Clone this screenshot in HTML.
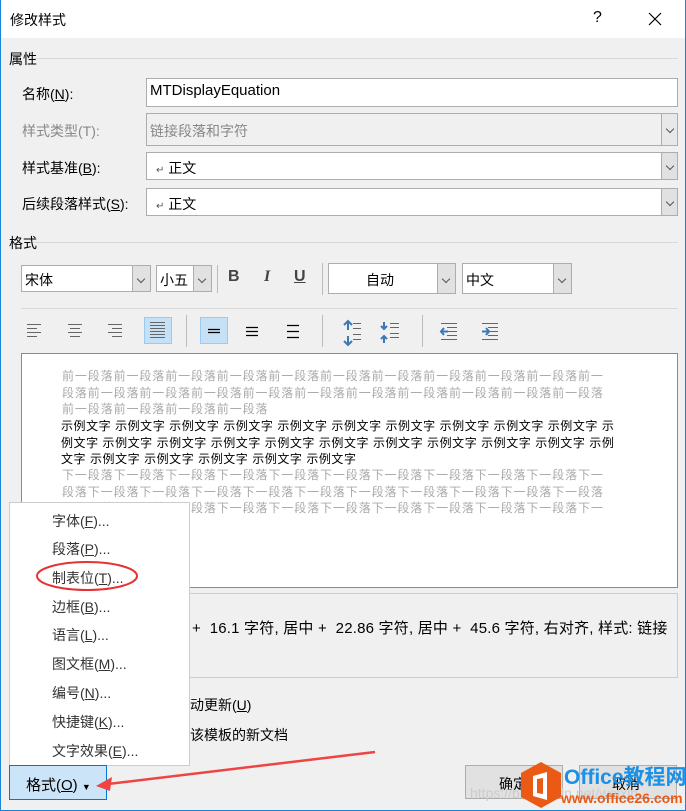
<!DOCTYPE html>
<html><head><meta charset="utf-8"><style>
*{margin:0;padding:0;box-sizing:border-box}
body{width:686px;height:811px;overflow:hidden;background:#f0f0f0;font-family:"Liberation Sans","Noto Sans CJK SC",sans-serif;font-size:14px;color:#000;position:relative}
.a{position:absolute;white-space:nowrap}
.win{position:absolute;left:0;top:0;width:686px;height:811px;border:1px solid #1883d7;border-top:none}
.title{position:absolute;left:1px;top:0;width:684px;height:38px;background:#fff}
.box{position:absolute;background:#fff;border:1px solid #adadad}
.dd{position:absolute;top:0;right:0;bottom:0;width:18px;background:#e1e1e1;border-left:1px solid #adadad}
.dd:after{content:"";position:absolute;left:5px;top:40%;width:5px;height:5px;border-right:1px solid #555;border-bottom:1px solid #555;transform:rotate(45deg)}
.line{position:absolute;height:1px;background:#d9d9d9}
.vs{position:absolute;width:1px;background:#bbb}
.g{color:#aaa}
.p{position:absolute;left:62px;font-size:12px;line-height:16.5px;white-space:nowrap;letter-spacing:0.9px}
.mi{position:absolute;left:52px;font-size:14px;color:#333}
u{text-decoration:underline}
</style></head><body>
<div class="win"></div>
<div class="title"></div>
<div class="a" style="left:10px;top:10px;font-size:14px">修改样式</div>
<div class="a" style="left:593px;top:9px;font-size:16px">?</div>
<svg class="a" style="left:648px;top:12px" width="14" height="14"><path d="M1 1L13 13M13 1L1 13" stroke="#000" stroke-width="1.2"/></svg>

<div class="a" style="left:9px;top:49px;font-size:14px">属性</div>
<div class="line" style="left:34px;top:58px;width:644px"></div>
<div class="a" style="left:22px;top:84px">名称(<u>N</u>):</div>
<div class="box" style="left:146px;top:78px;width:532px;height:29px"></div>
<div class="a" style="left:150px;top:82px;font-size:15px">MTDisplayEquation</div>
<div class="a g" style="left:22px;top:121px;color:#888">样式类型(T):</div>
<div class="box" style="left:146px;top:113px;width:532px;height:33px;background:#f0f0f0"><div class="dd" style="width:16px;background:#e8e8e8"></div></div>
<div class="a" style="left:150px;top:121px;color:#888">链接段落和字符</div>
<div class="a" style="left:22px;top:158px">样式基准(<u>B</u>):</div>
<div class="box" style="left:146px;top:152px;width:532px;height:28px"><div class="dd" style="width:16px"></div></div>
<div class="a" style="left:156px;top:158px"><span style="font-size:10px;color:#555">↵</span> 正文</div>
<div class="a" style="left:22px;top:194px">后续段落样式(<u>S</u>):</div>
<div class="box" style="left:146px;top:188px;width:532px;height:28px"><div class="dd" style="width:16px"></div></div>
<div class="a" style="left:156px;top:194px"><span style="font-size:10px;color:#555">↵</span> 正文</div>

<div class="a" style="left:9px;top:233px">格式</div>
<div class="line" style="left:34px;top:242px;width:644px"></div>
<div class="box" style="left:21px;top:265px;width:130px;height:27px"><div class="dd"></div></div>
<div class="a" style="left:25px;top:270px">宋体</div>
<div class="box" style="left:156px;top:265px;width:56px;height:27px"><div class="dd"></div></div>
<div class="a" style="left:160px;top:270px">小五</div>
<div class="vs" style="left:217px;top:265px;height:28px"></div>
<div class="a" style="left:228px;top:268px;font-weight:bold;font-size:16px;color:#444">B</div>
<div class="a" style="left:264px;top:268px;font-style:italic;font-weight:bold;font-size:16px;color:#444;font-family:'Liberation Serif'">I</div>
<div class="a" style="left:294px;top:268px;font-weight:bold;font-size:16px;color:#444;text-decoration:underline">U</div>
<div class="vs" style="left:322px;top:263px;height:32px"></div>
<div class="box" style="left:328px;top:263px;width:128px;height:31px"><div class="dd"></div></div>
<div class="a" style="left:366px;top:270px">自动</div>
<div class="box" style="left:462px;top:263px;width:110px;height:31px"><div class="dd"></div></div>
<div class="a" style="left:466px;top:270px">中文</div>
<div class="line" style="left:21px;top:308px;width:657px"></div>

<div class="a" style="left:144px;top:317px;width:28px;height:27px;background:#c6e0f5;border:1px solid #9ccaf0"></div>
<div class="a" style="left:200px;top:317px;width:28px;height:27px;background:#c6e0f5;border:1px solid #9ccaf0"></div>
<div class="vs" style="left:186px;top:315px;height:32px"></div>
<div class="vs" style="left:322px;top:315px;height:32px"></div>
<div class="vs" style="left:422px;top:315px;height:32px"></div>
<svg class="a" style="left:0;top:310px" width="686" height="40" stroke="#666" stroke-width="1">
<path d="M27 14.5h14M27 18.5h10M27 22.5h14M27 26.5h10"/>
<path d="M68 14.5h14M70 18.5h10M68 22.5h14M70 26.5h10"/>
<path d="M108 14.5h14M112 18.5h10M108 22.5h14M112 26.5h10"/>
<path d="M150 12.5h15M150 15.5h15M150 18.5h15M150 21.5h15M150 24.5h15M150 27.5h15"/>
<g stroke="#000" stroke-width="1.3"><path d="M208 19.5h12M208 22.5h12"/><path d="M246 17.5h12M246 21.5h12M246 25.5h12"/><path d="M287 15.5h12M287 21.5h12M287 27.5h12"/></g>
<path d="M348 12v8M348 26v8" stroke="#3b78b8" stroke-width="2"/><path d="M344 15l4-4 4 4M344 31l4 4 4-4" stroke="#3b78b8" stroke-width="2" fill="none"/>
<path d="M353 13.5h8M353 18.5h8M353 24.5h8M353 29.5h8"/>
<path d="M384 12v7M384 26v7" stroke="#3b78b8" stroke-width="2"/><path d="M381 16l3 3 3-3M381 29l3-3 3 3" stroke="#3b78b8" stroke-width="2" fill="none"/>
<path d="M390 13.5h9M390 17.5h9M390 23.5h9M390 27.5h9"/>
<path d="M441 13.5h16M447 17.5h10M447 21.5h10M447 25.5h10M441 29.5h16"/><path d="M448 21.5h-7M444 18l-3 3.5 3 3.5" stroke="#3b78b8" stroke-width="2" fill="none"/>
<path d="M482 13.5h16M488 17.5h10M488 21.5h10M488 25.5h10M482 29.5h16"/><path d="M482 21.5h7M486 18l3 3.5-3 3.5" stroke="#3b78b8" stroke-width="2" fill="none"/>
</svg>

<div class="box" style="left:21px;top:353px;width:657px;height:235px;border-color:#8a8a8a"></div>
<div class="p g" style="top:368px">前一段落前一段落前一段落前一段落前一段落前一段落前一段落前一段落前一段落前一段落前一<br>段落前一段落前一段落前一段落前一段落前一段落前一段落前一段落前一段落前一段落前一段落<br>前一段落前一段落前一段落前一段落</div>
<div class="p" style="top:418px;left:61px;letter-spacing:0.55px">示例文字 示例文字 示例文字 示例文字 示例文字 示例文字 示例文字 示例文字 示例文字 示例文字 示<br>例文字 示例文字 示例文字 示例文字 示例文字 示例文字 示例文字 示例文字 示例文字 示例文字 示例<br>文字 示例文字 示例文字 示例文字 示例文字 示例文字</div>
<div class="p g" style="top:467px">下一段落下一段落下一段落下一段落下一段落下一段落下一段落下一段落下一段落下一段落下一<br>段落下一段落下一段落下一段落下一段落下一段落下一段落下一段落下一段落下一段落下一段落<br>下一段落下一段落下一段落下一段落下一段落下一段落下一段落下一段落下一段落下一段落下一<br>段落</div>

<div class="a" style="left:186px;top:593px;width:492px;height:85px;border:1px solid #ccc;background:#f0f0f0"></div>
<div class="a" style="left:192px;top:617px;font-size:15px;letter-spacing:0.2px">+ &nbsp;16.1 字符, 居中 + &nbsp;22.86 字符, 居中 + &nbsp;45.6 字符, 右对齐, 样式: 链接</div>
<div class="a" style="left:190px;top:695px">动更新(<u>U</u>)</div>
<div class="a" style="left:190px;top:725px">该模板的新文档</div>

<div class="a" style="left:465px;top:765px;width:98px;height:34px;background:#e1e1e1;border:1px solid #adadad"></div>
<div class="a" style="left:499px;top:774px">确定</div>
<div class="a" style="left:579px;top:765px;width:98px;height:34px;background:#e1e1e1;border:1px solid #adadad"></div>
<div class="a" style="left:612px;top:774px">取消</div>
<div class="a" style="left:470px;top:785px;font-size:14px;color:#ccc">https://blog.csdn.net/weixin</div>

<div class="a" style="left:9px;top:502px;width:181px;height:264px;background:#fff;border:1px solid #ccc"></div>
<div class="mi" style="top:511px">字体(<u>F</u>)...</div>
<div class="mi" style="top:539px">段落(<u>P</u>)...</div>
<div class="mi" style="top:568px">制表位(<u>T</u>)...</div>
<div class="mi" style="top:597px">边框(<u>B</u>)...</div>
<div class="mi" style="top:625px">语言(<u>L</u>)...</div>
<div class="mi" style="top:654px">图文框(<u>M</u>)...</div>
<div class="mi" style="top:683px">编号(<u>N</u>)...</div>
<div class="mi" style="top:712px">快捷键(<u>K</u>)...</div>
<div class="mi" style="top:741px">文字效果(<u>E</u>)...</div>
<div class="a" style="left:9px;top:765px;width:98px;height:35px;background:#cce4f7;border:1px solid #0078d7"></div>
<div class="a" style="left:26px;top:774px;font-size:15px">格式(<u>O</u>) <span style="font-size:9px">▼</span></div>

<svg class="a" style="left:0;top:0" width="686" height="811">
<ellipse cx="87" cy="576" rx="50" ry="14" fill="none" stroke="#e53333" stroke-width="2"/>
<path d="M375 752 L108 784" stroke="#ee4444" stroke-width="2.5" fill="none"/>
<path d="M96 786 L112 777 L110 791 Z" fill="#ee4444"/>
<path d="M541 762 L561 773 L561 797 L541 808 L521 797 L521 773 Z" fill="#eb5a14"/>
<path d="M533 776 L547 772 L547 800 L533 796 Z" fill="#fff"/>
<path d="M537 779 L543 778 L543 794 L537 793 Z" fill="#eb5a14"/>
</svg>
<div class="a" style="left:564px;top:761px;font-size:21px;font-weight:bold;color:#1a90e6">Office教程网</div>
<div class="a" style="left:561px;top:790px;font-size:14px;font-weight:bold;color:#eb5a14">www.office26.com</div>
</body></html>
